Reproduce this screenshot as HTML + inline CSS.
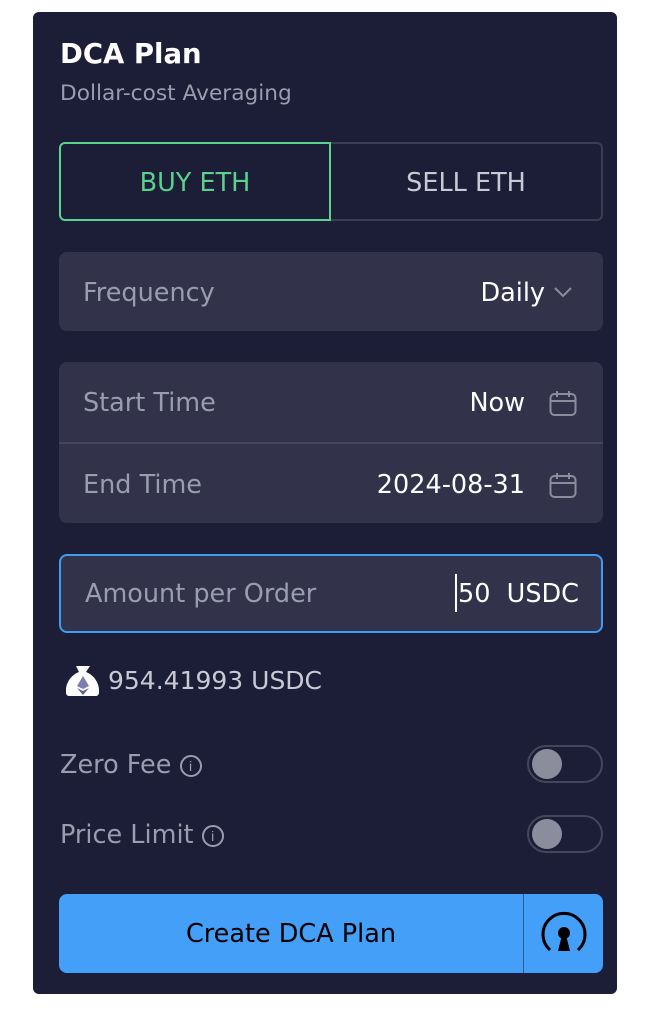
<!DOCTYPE html>
<html><head><meta charset="utf-8"><style>
*{box-sizing:border-box;margin:0;padding:0}
body{width:648px;height:1012px;background:#fff;font-family:"DejaVu Sans",sans-serif;position:relative;overflow:hidden}
.card{position:absolute;left:33px;top:12px;width:584px;height:982px;background:#1c1d36;border-radius:6px}
.abs{position:absolute}
.t{color:#9a9cb0;font-size:25.5px}
.box{position:absolute;left:26px;width:544px;background:#32334a;border-radius:8px}
.w{color:#fff;font-size:25.5px}
.tog{position:absolute;left:494px;width:76px;height:38px;border:2px solid #44465c;border-radius:19px}
.tog::after{content:"";position:absolute;left:3px;top:2px;width:30px;height:30px;border-radius:50%;background:#8b8d9c}
.cal{position:absolute;width:28px;height:28px}
.i{display:inline-block;width:22px;height:22px;border:2px solid #9a9cb0;border-radius:50%;font-size:14px;text-align:center;line-height:18px;vertical-align:2px;font-family:"Liberation Sans",sans-serif}
</style></head><body>
<div class="card">
<div class="abs" style="left:27px;top:26px;color:#fff;font-size:27.5px;font-weight:bold">DCA Plan</div>
<div class="abs" style="left:27px;top:69px;color:#9a9cb0;font-size:21.7px">Dollar-cost Averaging</div>

<div class="abs" style="left:26px;top:130px;width:272px;height:79px;border:2px solid #5ad28c;border-radius:6px 0 0 6px;color:#5ad28c;font-size:25.5px;text-align:center;line-height:79px">BUY ETH</div>
<div class="abs" style="left:298px;top:130px;width:272px;height:79px;border:2px solid #3b3d52;border-left:none;border-radius:0 6px 6px 0;color:#c8c9d4;font-size:25.5px;text-align:center;line-height:79px">SELL ETH</div>

<div class="box" style="top:240px;height:79px">
<div class="abs t" style="left:24px;top:26px">Frequency</div>
<div class="abs w" style="right:58px;top:26px">Daily</div>
<svg class="abs" style="right:30px;top:33px" width="20" height="14" viewBox="0 0 20 14"><path d="M2 3l8 8 8-8" fill="none" stroke="#8b8d9c" stroke-width="2"/></svg>
</div>

<div class="box" style="top:350px;height:161px">
<div class="abs t" style="left:24px;top:26px">Start Time</div>
<div class="abs w" style="right:78px;top:26px">Now</div>
<svg class="cal" style="right:26px;top:27px" viewBox="0 0 28 28"><rect x="1.5" y="5" width="25" height="21" rx="4" fill="none" stroke="#8b8d9c" stroke-width="2"/><path d="M1.5 12h25M8 2v6M20 2v6" stroke="#8b8d9c" stroke-width="2"/></svg>
<div class="abs" style="left:0;top:80px;width:544px;height:2px;background:#44465c"></div>
<div class="abs t" style="left:24px;top:108px">End Time</div>
<div class="abs w" style="right:78px;top:108px">2024-08-31</div>
<svg class="cal" style="right:26px;top:109px" viewBox="0 0 28 28"><rect x="1.5" y="5" width="25" height="21" rx="4" fill="none" stroke="#8b8d9c" stroke-width="2"/><path d="M1.5 12h25M8 2v6M20 2v6" stroke="#8b8d9c" stroke-width="2"/></svg>
</div>

<div class="box" style="top:542px;height:79px;border:2px solid #3f9cf0">
<div class="abs t" style="left:24px;top:23px">Amount per Order</div>
<div class="abs" style="left:394px;top:18px;width:2px;height:38px;background:#fff"></div>
<div class="abs w" style="left:397px;top:23px">50&nbsp; USDC</div>
</div>

<svg class="abs" style="left:33px;top:653px" width="34" height="32" viewBox="0 0 34 32"><path d="M10 1h14l-4 6c8 3 13 11 13 18v3a3 3 0 0 1-3 3H3a3 3 0 0 1-3-3v-3C0 18 5 10 13 7z" fill="#fff"/><path d="M17 11l-6 10 6 3 6-3z" fill="#7b7fb0"/><path d="M11 23l6 7 6-7-6 3z" fill="#5d6190"/></svg>
<div class="abs" style="left:75px;top:654px;color:#c8c9d4;font-size:25px">954.41993 USDC</div>

<div class="abs t" style="left:27px;top:738px">Zero Fee <span class="i">i</span></div>
<div class="tog" style="top:733px"></div>
<div class="abs t" style="left:27px;top:808px">Price Limit <span class="i">i</span></div>
<div class="tog" style="top:803px"></div>

<div class="abs" style="left:26px;top:882px;width:544px;height:79px;background:#449ff8;border-radius:8px">
<div class="abs" style="left:0;top:1px;width:464px;text-align:center;line-height:79px;font-size:25.5px;color:#000">Create DCA Plan</div>
<div class="abs" style="left:464px;top:0;width:1px;height:79px;background:#2a5d94"></div>
<svg class="abs" style="left:477px;top:13px" width="56" height="56" viewBox="0 0 56 56"><path d="M14 43A21 21 0 1 1 42 43" fill="none" stroke="#000" stroke-width="3"/><circle cx="28" cy="26" r="6" fill="#000"/><path d="M26 28h4l4 16H22z" fill="#000"/></svg>
</div>
</div>
</body></html>
